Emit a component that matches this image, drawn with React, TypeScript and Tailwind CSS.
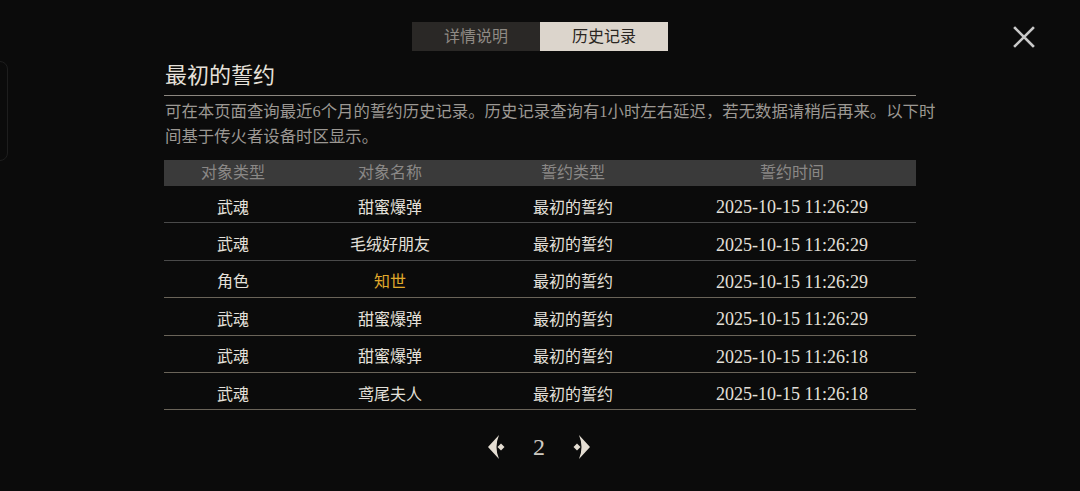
import React from 'react';

const FONT = { fontFamily: '"Liberation Serif", "Noto Sans CJK SC", serif' };

interface Record {
  kind: string;
  name: string;
  type: string;
  time: string;
  highlight?: boolean;
}

const records: Record[] = [
  { kind: '武魂', name: '甜蜜爆弹', type: '最初的誓约', time: '2025-10-15 11:26:29' },
  { kind: '武魂', name: '毛绒好朋友', type: '最初的誓约', time: '2025-10-15 11:26:29' },
  { kind: '角色', name: '知世', type: '最初的誓约', time: '2025-10-15 11:26:29', highlight: true },
  { kind: '武魂', name: '甜蜜爆弹', type: '最初的誓约', time: '2025-10-15 11:26:29' },
  { kind: '武魂', name: '甜蜜爆弹', type: '最初的誓约', time: '2025-10-15 11:26:18' },
  { kind: '武魂', name: '鸢尾夫人', type: '最初的誓约', time: '2025-10-15 11:26:18' },
];

const cols = 'grid grid-cols-[138px_176px_190px_248px]';

const ArrowLeft = () => (
  <svg width="20" height="26" viewBox="0 0 20 26">
    <path d="M12 1 L1 13 L12 25 Q7 13 12 1 Z" fill="#e4ddd2" />
    <path d="M10.5 13 L14 9.5 L17.5 13 L14 16.5 Z" fill="#e4ddd2" />
  </svg>
);

const ArrowRight = () => (
  <svg width="20" height="26" viewBox="0 0 20 26">
    <path d="M8 1 L19 13 L8 25 Q13 13 8 1 Z" fill="#e4ddd2" />
    <path d="M2.5 13 L6 9.5 L9.5 13 L6 16.5 Z" fill="#e4ddd2" />
  </svg>
);

export default function App() {
  return (
    <div className="relative w-[1080px] h-[491px] bg-[#0b0b0b] overflow-hidden" style={FONT}>
      {/* faint side panel at the left edge */}
      <div className="absolute left-[-12px] top-[61px] w-[20px] h-[100px] rounded-lg border border-[#1e1e1e]" />

      {/* close button */}
      <button className="absolute left-[1013px] top-[26px] w-[22px] h-[22px]">
        <svg width="22" height="22" viewBox="0 0 22 22">
          <path d="M2 2 L20 20 M20 2 L2 20" stroke="#c9c9c9" strokeWidth="2.6" strokeLinecap="square" />
        </svg>
      </button>

      <div className="flex flex-col items-center pt-[22px]">
        <div className="flex h-[29px]">
          <div className="w-[128px] flex items-center justify-center bg-[#2a2826] text-[#8f8a84] text-[16px]">
            详情说明
          </div>
          <div className="w-[128px] flex items-center justify-center bg-[#dcd5cc] text-[#2a2622] text-[16px]">
            历史记录
          </div>
        </div>

        <div className="w-[752px] mt-[10px]">
          <h1 className="text-[22px] leading-[30px] text-[#e6e1da] pl-px">最初的誓约</h1>
          <div className="h-px bg-[#8c8780] mt-[4px]" />
          <p className="w-[782px] text-[16.4px] leading-[25px] text-[#9c9893] mt-[3px] pl-px">
            可在本页面查询最近6个月的誓约历史记录。历史记录查询有1小时左右延迟，若无数据请稍后再来。以下时间基于传火者设备时区显示。
          </p>

          <div className="mt-[11px]">
            <div className={`${cols} h-[26px] items-center bg-[#3a3a3a] text-[16px] text-[#8a8886] text-center`}>
              <span>对象类型</span>
              <span>对象名称</span>
              <span>誓约类型</span>
              <span>誓约时间</span>
            </div>
            {records.map((r, i) => (
              <div
                key={i}
                className={`${cols} h-[37.4px] pt-[7px] items-center text-[16px] text-[#e4e0da] text-center border-b ${
                  i < 2 ? 'border-[#4a4a4a]' : 'border-[#6a6459]'
                }`}
              >
                <span>{r.kind}</span>
                <span className={r.highlight ? 'text-[#e0a92c]' : ''}>{r.name}</span>
                <span>{r.type}</span>
                <span className="text-[18px]">{r.time}</span>
              </div>
            ))}
          </div>
        </div>

        <div className="flex items-center mt-[24px] gap-[26px] -ml-[2px]">
          <ArrowLeft />
          <span className="text-[24px] text-[#cfcac2] leading-none">2</span>
          <ArrowRight />
        </div>
      </div>
    </div>
  );
}
